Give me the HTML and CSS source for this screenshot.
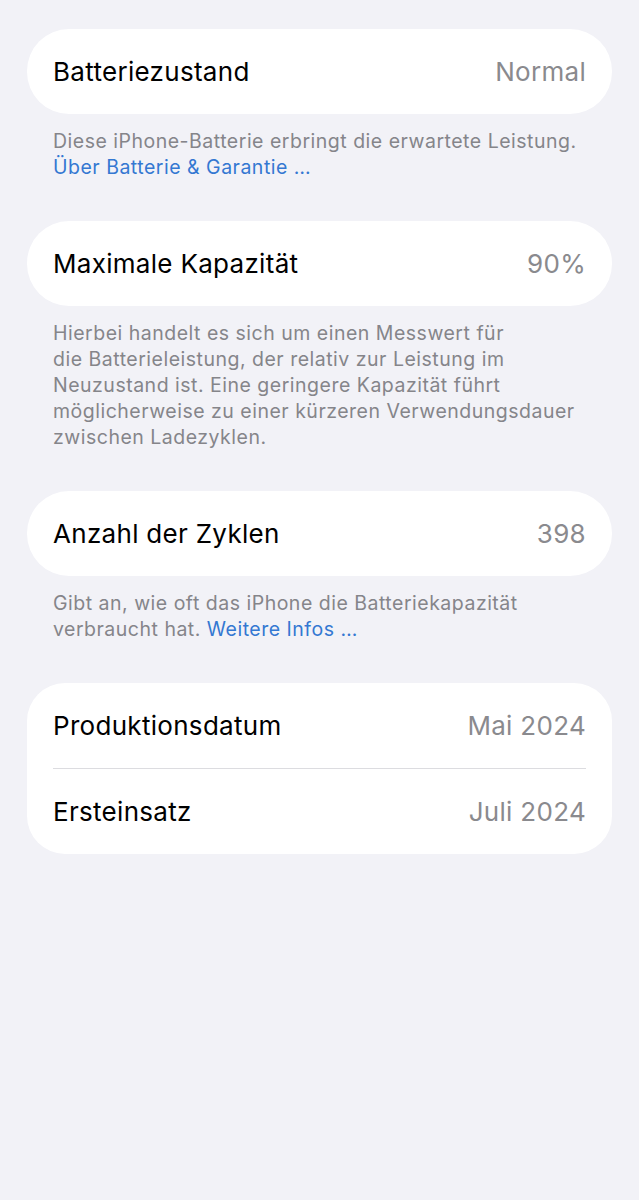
FILE: index.html
```html
<!DOCTYPE html>
<html lang="de">
<head>
  <meta charset="UTF-8">
  <meta name="viewport" content="width=device-width, initial-scale=1.0">
  <title>Batteriezustand</title>
  <link rel="stylesheet" href="styles.css">
</head>
<body>
  <main class="settings">
    <section class="group">
      <div class="card">
        <div class="row">
          <span class="label">Batteriezustand</span>
          <span class="value">Normal</span>
        </div>
      </div>
      <p class="footer">Diese iPhone-Batterie erbringt die erwartete Leistung.<br><a href="#">Über Batterie &amp; Garantie …</a></p>
    </section>

    <section class="group">
      <div class="card">
        <div class="row">
          <span class="label">Maximale Kapazität</span>
          <span class="value">90%</span>
        </div>
      </div>
      <p class="footer">Hierbei handelt es sich um einen Messwert für<br>die Batterieleistung, der relativ zur Leistung im<br>Neuzustand ist. Eine geringere Kapazität führt<br>möglicherweise zu einer kürzeren Verwendungsdauer<br>zwischen Ladezyklen.</p>
    </section>

    <section class="group">
      <div class="card">
        <div class="row">
          <span class="label">Anzahl der Zyklen</span>
          <span class="value">398</span>
        </div>
      </div>
      <p class="footer">Gibt an, wie oft das iPhone die Batteriekapazität<br>verbraucht hat. <a href="#">Weitere Infos …</a></p>
    </section>

    <section class="group">
      <div class="card card-list">
        <div class="row">
          <span class="label">Produktionsdatum</span>
          <span class="value">Mai 2024</span>
        </div>
        <div class="row">
          <span class="label">Ersteinsatz</span>
          <span class="value">Juli 2024</span>
        </div>
      </div>
    </section>
  </main>
</body>
</html>
```

FILE: styles.css
```css
body {
  margin: 0;
  background-color: #f2f2f7;
  font-family: Inter, "Noto Sans", sans-serif;
  color: #000;
  min-height: 1200px;
}
.settings {
  padding: 29px 27px 0 27px;
  display: flex;
  flex-direction: column;
  gap: 41px;
}
.card {
  background-color: #fff;
  border-radius: 42px;
  padding: 0 26px;
}
.card-list {
  border-radius: 38px;
}
.row {
  display: flex;
  justify-content: space-between;
  align-items: center;
  height: 85px;
  font-size: 26px;
  letter-spacing: 0.3px;
}
.card-list .row + .row {
  border-top: 1px solid #dcdce0;
}
.value {
  color: #8a8a8e;
}
.footer {
  margin: 0;
  padding: 14px 26px 0 26px;
  font-size: 19.5px;
  line-height: 26px;
  color: #85858a;
  letter-spacing: 0.5px;
}
.footer a {
  color: #3478d2;
  text-decoration: none;
}
```
